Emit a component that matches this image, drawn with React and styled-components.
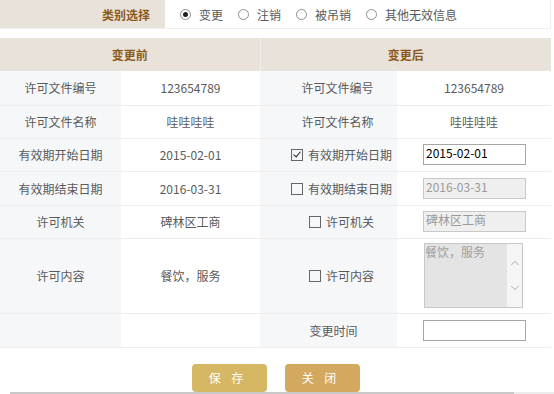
import styled, { createGlobalStyle } from "styled-components";
import { ChevronUp, ChevronDown } from "lucide-react";

const GlobalStyle = createGlobalStyle`
  html, body {
    margin: 0;
    padding: 0;
    background: #ffffff;
    overflow: hidden;
  }
  body {
    font: 12px "Noto Sans CJK SC", "Microsoft YaHei", sans-serif;
    color: #5a5a5a;
  }
`;

const rows = [
  { label: "许可文件编号", before: "123654789", after: "123654789", h: 34 },
  { label: "许可文件名称", before: "哇哇哇哇", after: "哇哇哇哇" },
  { label: "有效期开始日期", before: "2015-02-01", check: true, checked: true, input: "2015-02-01" },
  { label: "有效期结束日期", before: "2016-03-31", check: true, input: "2016-03-31", disabled: true, h: 34 },
  { label: "许可机关", before: "碑林区工商", check: true, input: "碑林区工商", disabled: true },
  { label: "许可内容", before: "餐饮，服务", check: true, area: "餐饮，服务", h: 75 },
];

const kinds = ["变更", "注销", "被吊销", "其他无效信息"];

export default function App() {
  return (
    <Page>
      <GlobalStyle />
      <TypeBar>
        <TypeLabel>类别选择</TypeLabel>
        <TypeOptions>
          {kinds.map((k, i) => (
            <RadioItem key={k}>
              <Radio $on={i === 0} />
              {k}
            </RadioItem>
          ))}
        </TypeOptions>
      </TypeBar>

      <Table>
        <colgroup>
          <col style={{ width: 121 }} />
          <col style={{ width: 139 }} />
          <col style={{ width: 137 }} />
          <col style={{ width: 154 }} />
        </colgroup>
        <thead>
          <tr>
            <Th colSpan={2}>变更前</Th>
            <Th colSpan={2}>变更后</Th>
          </tr>
        </thead>
        <tbody>
          {rows.map((r) => (
            <Row key={r.label} $h={r.h}>
              <LabelCell>{r.label}</LabelCell>
              <ValueCell>{r.before}</ValueCell>
              <LabelCell $pad={r.check ? 26 : 18}>
                {r.check && <Check $on={r.checked} />}
                {r.label}
              </LabelCell>
              <ValueCell>
                {r.after}
                {r.input && (
                  <Field readOnly value={r.input} $disabled={r.disabled} />
                )}
                {r.area && (
                  <AreaBox>
                    <AreaText>{r.area}</AreaText>
                    <ScrollCol>
                      <ChevronUp size={14} strokeWidth={1.4} color="#9a9a9a" />
                      <ChevronDown size={14} strokeWidth={1.4} color="#9a9a9a" />
                    </ScrollCol>
                  </AreaBox>
                )}
              </ValueCell>
            </Row>
          ))}
          <Row $h={34}>
            <LabelCell></LabelCell>
            <ValueCell></ValueCell>
            <LabelCell $pad={10}>变更时间</LabelCell>
            <ValueCell>
              <Field readOnly value="" />
            </ValueCell>
          </Row>
        </tbody>
      </Table>

      <Actions>
        <Button $tone="#d6b764">保 存</Button>
        <Button $tone="#d3a960">关 闭</Button>
      </Actions>
      <ScrollTrack>
        <ScrollThumb />
      </ScrollTrack>
    </Page>
  );
}

const Page = styled.div`
  width: 554px;
  height: 394px;
  position: relative;
`;

const TypeBar = styled.div`
  width: 551px;
  height: 29px;
  display: flex;
  border-bottom: 1px solid #eeeeee;
  border-right: 1px solid #eeeeee;
  box-sizing: border-box;
`;

const TypeLabel = styled.div`
  width: 165px;
  background: #e8e2da;
  color: #8b5a1a;
  font-weight: 700;
  text-align: right;
  padding-right: 15px;
  box-sizing: border-box;
  line-height: 29px;
`;

const TypeOptions = styled.div`
  display: flex;
  align-items: center;
  padding-left: 15px;
  gap: 15px;
`;

const RadioItem = styled.label`
  display: flex;
  align-items: center;
  gap: 8px;
  color: #5a5a5a;
`;

const Radio = styled.span`
  width: 11px;
  height: 11px;
  border: 1px solid #8f8f8f;
  border-radius: 50%;
  box-sizing: border-box;
  display: inline-flex;
  align-items: center;
  justify-content: center;
  &::after {
    content: "";
    width: 5px;
    height: 5px;
    border-radius: 50%;
    background: ${(p) => (p.$on ? "#222222" : "transparent")};
  }
`;

const Table = styled.table`
  margin-top: 9px;
  width: 551px;
  table-layout: fixed;
  border-collapse: collapse;
`;

const Th = styled.th`
  height: 33px;
  padding: 0;
  background: #e8e2da;
  color: #8b5a1a;
  font-weight: 700;
  border-left: 1px solid #f1ede8;
  &:first-child {
    border-left: none;
  }
`;

const Row = styled.tr`
  height: ${(p) => p.$h || 33}px;
`;

const LabelCell = styled.td`
  padding: 0 0 0 ${(p) => p.$pad || 0}px;
  background: #f5f7f9;
  text-align: center;
  border-bottom: 1px solid #eeeeee;
  white-space: nowrap;
`;

const ValueCell = styled.td`
  padding: 0;
  background: #ffffff;
  text-align: center;
  border-bottom: 1px solid #eeeeee;
`;

const Check = styled.span`
  display: inline-block;
  vertical-align: -1px;
  width: 12px;
  height: 12px;
  margin-right: 5px;
  border: 1px solid #666666;
  box-sizing: border-box;
  position: relative;
  &::after {
    content: "";
    display: ${(p) => (p.$on ? "block" : "none")};
    position: absolute;
    left: 3px;
    top: 0px;
    width: 3px;
    height: 6px;
    border: solid #222222;
    border-width: 0 1.5px 1.5px 0;
    transform: rotate(40deg);
  }
`;

const Field = styled.input`
  display: block;
  margin: 0 0 0 26px;
  width: 103px;
  height: 21px;
  box-sizing: border-box;
  padding: 0 2px 4px;
  font: 12px "Noto Sans CJK SC", sans-serif;
  color: ${(p) => (p.$disabled ? "#9a9a9a" : "#000000")};
  background: ${(p) => (p.$disabled ? "#efefef" : "#ffffff")};
  border: 1px solid ${(p) => (p.$disabled ? "#c8c8c8" : "#a6a6a6")};
  outline: none;
`;

const AreaBox = styled.div`
  margin-left: 27px;
  width: 99px;
  height: 65px;
  display: flex;
  border: 1px solid #c8c8c8;
  box-sizing: border-box;
  background: #e4e4e4;
  text-align: left;
`;

const AreaText = styled.div`
  flex: 1;
  color: #a0a0a0;
  line-height: 14px;
  padding-top: 1px;
`;

const ScrollCol = styled.div`
  width: 15px;
  background: #f5f5f5;
  display: flex;
  flex-direction: column;
  justify-content: center;
  align-items: center;
  gap: 11px;
`;

const Actions = styled.div`
  width: 551px;
  display: flex;
  justify-content: center;
  gap: 18px;
  margin-top: 16px;
`;

const Button = styled.button`
  width: 75px;
  height: 28px;
  border: none;
  border-radius: 4px;
  background: ${(p) => p.$tone};
  color: #ffffff;
  font: 12px "Noto Sans CJK SC", sans-serif;
  letter-spacing: 4px;
  padding-left: 4px;
`;

const ScrollTrack = styled.div`
  position: absolute;
  left: 10px;
  right: 0;
  bottom: 0;
  height: 2px;
  background: #ececec;
`;

const ScrollThumb = styled.div`
  width: 504px;
  height: 100%;
  background: #c9c9c9;
`;
